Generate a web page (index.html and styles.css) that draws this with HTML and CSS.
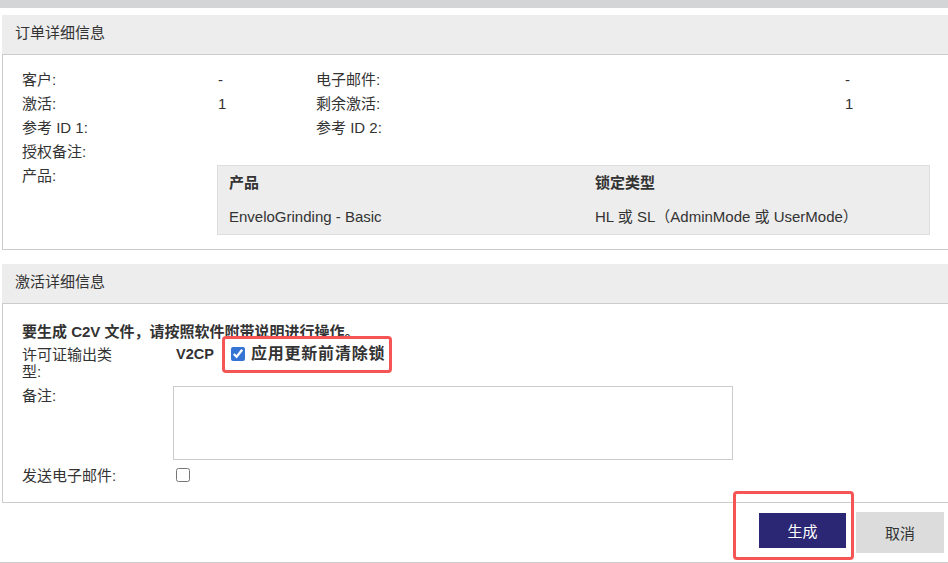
FILE: index.html
```html
<!DOCTYPE html>
<html lang="zh-CN">
<head>
    <meta charset="UTF-8">
    <title>订单详细信息</title>
    <link rel="stylesheet" href="styles.css">
</head>
<body>
    <div class="topbar"></div>

    <!-- Order details -->
    <div class="panel">
        <div class="panel-head">订单详细信息</div>
        <div class="panel-body order-grid">
            <span>客户:</span><span>-</span><span>电子邮件:</span><span>-</span>
            <span>激活:</span><span>1</span><span>剩余激活:</span><span>1</span>
            <span>参考 ID 1:</span><span></span><span>参考 ID 2:</span><span></span>
            <span>授权备注:</span><span></span><span></span><span></span>
            <span>产品:</span>
            <table class="product-table">
                <thead>
                    <tr><th class="col-product">产品</th><th>锁定类型</th></tr>
                </thead>
                <tbody>
                    <tr><td>EnveloGrinding - Basic</td><td>HL 或 SL（AdminMode 或 UserMode）</td></tr>
                </tbody>
            </table>
        </div>
    </div>

    <!-- Activation details -->
    <div class="panel panel-second">
        <div class="panel-head">激活详细信息</div>
        <div class="panel-body">
            <p class="intro">要生成 C2V 文件，请按照软件附带说明进行操作。</p>
            <div class="form-grid">
                <label class="form-label">许可证输出类型:</label>
                <div class="form-value">
                    <strong>V2CP</strong>
                    <label class="check-opt marked">
                        <input type="checkbox" checked>
                        <span>应用更新前清除锁</span>
                    </label>
                </div>

                <label class="form-label">备注:</label>
                <div class="form-value"><textarea></textarea></div>

                <label class="form-label">发送电子邮件:</label>
                <div class="form-value"><input type="checkbox" class="plain-check"></div>
            </div>
        </div>
    </div>

    <div class="actions">
        <span class="marked marked-btn"><button class="btn-primary">生成</button></span>
        <button class="btn-cancel">取消</button>
    </div>
</body>
</html>
```

FILE: styles.css
```css
body {
    font-family: "Liberation Sans", "Noto Sans CJK SC", sans-serif;
    font-size: 15px;
    color: #333;
    background: #fff;
    margin: 0;
    overflow: hidden;
}
.topbar {
    height: 8px;
    background: #d4d5d7;
    margin-bottom: 7px;
}
.panel {
    margin: 0 -40px 0 2px;
}
.panel-second {
    margin-top: 14px;
}
.panel-head {
    background: #ededed;
    border-bottom: 1px solid #ccc;
    padding: 8px 13px 11px;
    line-height: 20px;
}
.panel-body {
    border-left: 1px solid #ccc;
    border-bottom: 1px solid #ccc;
    padding: 13px 0 14px 19px;
}
.order-grid {
    display: grid;
    grid-template-columns: 196px 98px 529px auto;
    grid-auto-rows: minmax(24px, auto);
    line-height: 24px;
    align-items: start;
}
.product-table {
    grid-column: 2 / 5;
    width: 713px;
    margin: 1px 0 0 -1px;
    border-collapse: collapse;
    background: #ededed;
    border: 1px solid #ddd;
    line-height: 18px;
}
.product-table th,
.product-table td {
    text-align: left;
    padding: 8px 11px;
}
.product-table th {
    font-weight: bold;
}
.col-product {
    width: 344px;
}
.intro {
    margin: 5px 0 0;
    font-weight: bold;
    line-height: 20px;
}
.form-grid {
    display: grid;
    grid-template-columns: 151px 1fr;
    row-gap: 6px;
    margin-top: 3px;
    line-height: 17px;
    padding-bottom: 4px;
}
.form-label {
    width: 100px;
    padding-top: 1px;
}
.form-value {
    display: flex;
    align-items: flex-start;
}
.form-value strong {
    margin: 1px 0 0 3px;
    font-size: 14.5px;
}
.check-opt {
    display: inline-flex;
    align-items: center;
    gap: 6px;
    margin-left: 17px;
    font-weight: bold;
    font-size: 16px;
    letter-spacing: 0.8px;
}
.check-opt input {
    width: 14px;
    height: 14px;
    margin: 0;
    accent-color: #3574d4;
}
.marked {
    position: relative;
}
.marked::after {
    content: "";
    position: absolute;
    top: -9px;
    bottom: -11px;
    left: -9px;
    right: -7px;
    border: 3px solid #f65556;
    border-radius: 4px;
    pointer-events: none;
}
textarea {
    width: 560px;
    height: 74px;
    box-sizing: border-box;
    border: 1px solid #ccc;
    resize: none;
    margin: 0;
}
.plain-check {
    width: 14px;
    height: 14px;
    margin: 2px 0 0 3px;
}
.actions {
    display: flex;
    justify-content: flex-end;
    align-items: flex-start;
    gap: 10px;
    height: 50px;
    padding: 9px 4px 0 0;
    border-bottom: 1px solid #ccc;
}
.actions button {
    font-family: inherit;
    font-size: 15px;
    border: none;
    cursor: pointer;
}
.btn-primary {
    display: block;
    width: 87px;
    height: 35px;
    margin-top: 1px;
    background: #2b2775;
    color: #fff;
}
.btn-cancel {
    width: 88px;
    height: 41px;
    background: #dcdcdc;
    color: #333;
}
.marked-btn::after {
    top: -21px;
    bottom: -12px;
    left: -26px;
    right: -8px;
}
```
